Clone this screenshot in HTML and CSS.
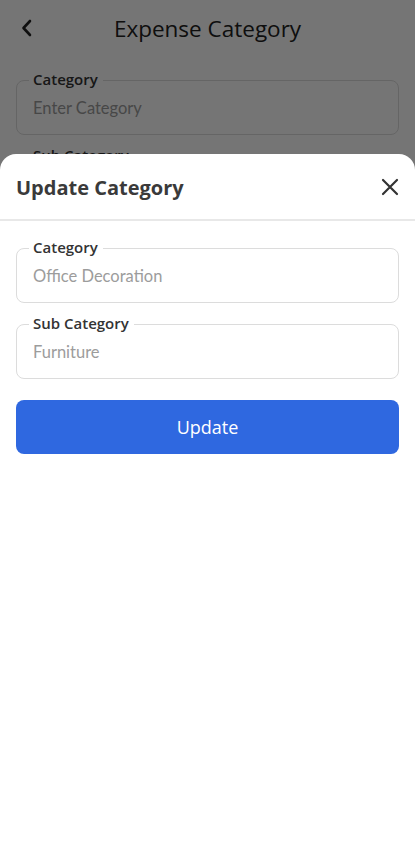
FILE: index.html
```html
<!DOCTYPE html>
<html lang="en">
<head>
    <meta charset="UTF-8">
    <meta name="viewport" content="width=device-width, initial-scale=1.0">
    <title>Expense Category</title>
    <link rel="stylesheet" href="styles.css">
</head>
<body>
    <div class="screen">
        <header class="topbar">
            <button class="back" aria-label="Back">
                <svg width="14" height="18" viewBox="0 0 14 18"><path d="M10 2 L3.5 9 L10 16" fill="none" stroke="#222" stroke-width="2.6" stroke-linecap="round" stroke-linejoin="round"/></svg>
            </button>
            <h1>Expense Category</h1>
        </header>

        <div class="form">
            <div class="field">
                <label>Category</label>
                <input type="text" placeholder="Enter Category">
            </div>
            <div class="field">
                <label>Sub Category</label>
                <input type="text" placeholder="Enter Sub Category">
            </div>
        </div>

        <!-- dim layer behind the bottom sheet -->
        <div class="overlay"></div>

        <div class="sheet">
            <div class="sheet-head">
                <h2>Update Category</h2>
                <button class="close" aria-label="Close">
                    <svg width="20" height="20" viewBox="0 0 20 20"><path d="M3 3 L17 17 M17 3 L3 17" fill="none" stroke="#333" stroke-width="2.2" stroke-linecap="round"/></svg>
                </button>
            </div>
            <div class="form sheet-form">
                <div class="field">
                    <label>Category</label>
                    <input type="text" placeholder="Office Decoration">
                </div>
                <div class="field">
                    <label>Sub Category</label>
                    <input type="text" placeholder="Furniture">
                </div>
                <button class="primary">Update</button>
            </div>
        </div>
    </div>
</body>
</html>
```

FILE: styles.css
```css
* {
    box-sizing: border-box;
}
body {
    margin: 0;
    font-family: "Open Sans", "Liberation Sans", sans-serif;
    background: #fff;
}
.screen {
    position: relative;
    width: 415px;
    height: 865px;
    overflow: hidden;
}
.topbar {
    height: 56px;
    display: flex;
    align-items: center;
    position: relative;
}
.back {
    position: absolute;
    left: 20px;
    top: 19px;
    border: none;
    background: none;
    padding: 0;
}
.topbar h1 {
    flex: 1;
    margin: 0;
    text-align: center;
    font-weight: 400;
    font-size: 22.5px;
    color: #222;
}
.form {
    padding: 24px 16px 0;
    display: flex;
    flex-direction: column;
    gap: 21px;
}
.field {
    position: relative;
    height: 55px;
    border: 1px solid #dcdcdc;
    border-radius: 8px;
}
.field label {
    position: absolute;
    left: 12px;
    top: -12px;
    padding: 0 5px 0 4px;
    background: #fff;
    font-weight: 600;
    font-size: 15px;
    line-height: 20px;
    color: #333;
}
.field input {
    width: 100%;
    height: 100%;
    border: none;
    background: transparent;
    padding: 0 16px;
    font-family: "Lato", sans-serif;
    font-size: 16.5px;
    outline: none;
}
.field input::placeholder {
    color: #9c9c9c;
}
.overlay {
    position: absolute;
    inset: 0;
    background: rgba(0, 0, 0, 0.54);
}
.sheet {
    position: absolute;
    left: 0;
    right: 0;
    top: 154px;
    bottom: 0;
    background: #fff;
    border-radius: 16px 16px 0 0;
}
.sheet-head {
    height: 67px;
    display: flex;
    align-items: center;
    justify-content: space-between;
    padding: 1px 15px 0 16px;
    border-bottom: 2px solid #e8e8e8;
}
.sheet-head h2 {
    margin: 0;
    font-size: 20px;
    font-weight: 700;
    color: #3a3a3a;
}
.close {
    border: none;
    background: none;
    padding: 0;
    display: flex;
}
.sheet-form {
    padding-top: 27px;
}
.primary {
    height: 54px;
    border: none;
    border-radius: 8px;
    background: #2f68e0;
    color: #fff;
    font-family: "Open Sans", sans-serif;
    font-size: 18px;
    font-weight: 500;
}
```
